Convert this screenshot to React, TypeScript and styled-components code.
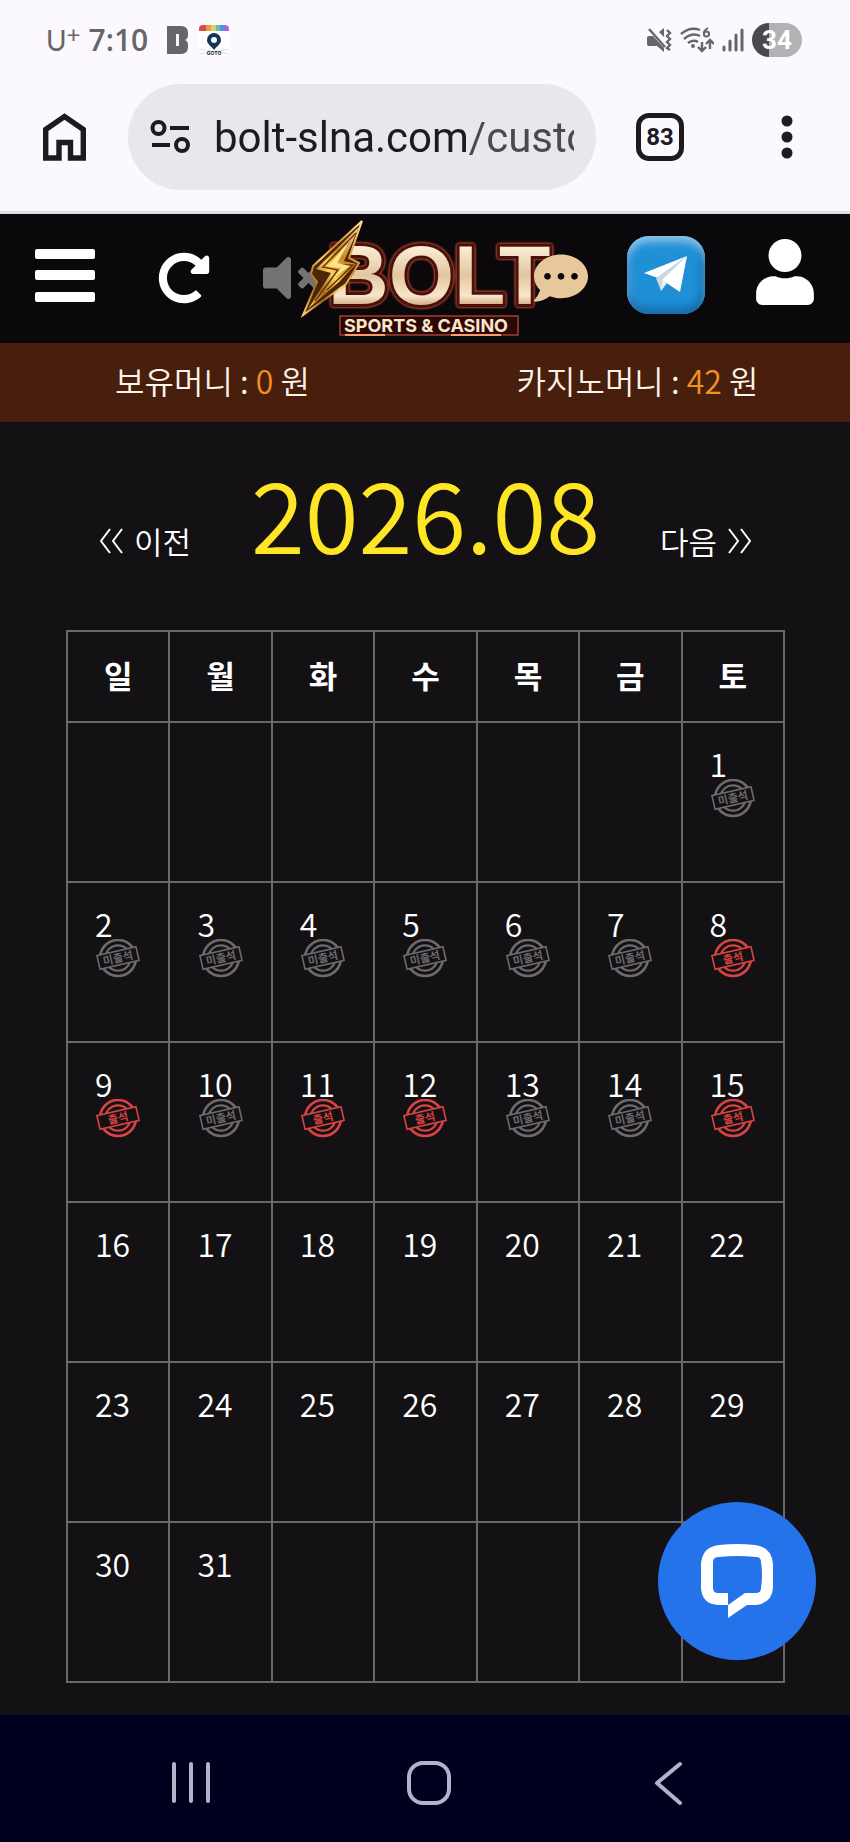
import React from 'react';
import styled, { createGlobalStyle } from 'styled-components';
import { FaRedoAlt, FaVolumeMute, FaCommentDots, FaUser } from 'react-icons/fa';

const korean = '"Noto Sans CJK KR DemiLight", "Noto Sans CJK KR", "Noto Sans", sans-serif';
const chromeFont = 'Roboto, "Open Sans", sans-serif';

const GlobalStyle = createGlobalStyle`
  * { box-sizing: border-box; }
  body { margin: 0; background: #141114; }
  button { padding: 0; border: 0; background: none; color: inherit; font: inherit; cursor: pointer; }
  a { color: inherit; text-decoration: none; }
  svg { display: block; flex: none; }
`;

const Page = styled.div`
  display: flex;
  flex-direction: column;
  min-height: 100vh;
  font-family: ${korean};
  font-size: 31px;
  font-weight: 350;
  color: #fff;
`;

/* Phone status bar and browser toolbar */

const BrowserChrome = styled.header`
  background: #fbf9fd;
  border-bottom: 3px solid #e0dfe2;
  color: #1c1b1f;
  font-family: ${chromeFont};
`;

const StatusBar = styled.div`
  display: flex;
  align-items: center;
  justify-content: space-between;
  height: 80px;
  padding: 0 48px 0 46px;
  color: #676569;
`;

const StatusGroup = styled.div`
  display: flex;
  align-items: center;
  gap: 8px;
`;

const Carrier = styled.span`
  font-family: Lato, sans-serif;
  font-size: 28px;
  font-weight: 400;
  line-height: 40px;
  sup { font-size: 24px; line-height: 0; vertical-align: 8px; }
`;

const Clock = styled.time`
  font-family: "Open Sans", sans-serif;
  font-size: 30px;
  font-weight: 600;
  line-height: 40px;
  margin-right: 10px;
`;

const Battery = styled.span`
  display: grid;
  place-items: center;
  width: 50px;
  height: 34px;
  border-radius: 17px;
  background: linear-gradient(90deg, #4b494d 34%, #b3b1b4 34%);
  color: #fff;
  font-size: 26px;
  font-weight: 700;
  line-height: 34px;
`;

const Toolbar = styled.div`
  display: flex;
  align-items: center;
  padding: 4px 47px 21px 42px;
`;

const Omnibox = styled.label`
  display: flex;
  flex: 1;
  align-items: center;
  gap: 22px;
  min-width: 0;
  height: 106px;
  margin: 0 40px 0 41px;
  padding: 0 22px;
  border-radius: 53px;
  background: #e9e7eb;
`;

const UrlInput = styled.input`
  flex: 1;
  min-width: 0;
  height: 60px;
  padding: 0;
  border: 0;
  outline: 0;
  background: linear-gradient(90deg, #1c1b1f 256px, #4b494f 256px);
  background-clip: text;
  -webkit-background-clip: text;
  color: transparent;
  font-family: ${chromeFont};
  font-size: 42px;
`;

const TabsButton = styled.button`
  width: 48px;
  height: 48px;
  border: 5px solid #1c1b1f;
  border-radius: 13px;
  font-size: 24px;
  font-weight: 700;
  line-height: 38px;
`;

const MoreButton = styled.button`
  margin-left: 87px;
`;

/* Site header */

const SiteHeader = styled.nav`
  display: grid;
  grid-template-columns: 1fr 1fr 364px 1fr 1fr;
  align-items: center;
  justify-items: center;
  height: 129px;
  padding: 0 6px 8px;
  background: #0a080b;
`;

const BrandGroup = styled.div`
  display: flex;
  align-items: center;
`;

const RefreshButton = styled.button`
  padding-top: 6px;
`;

const ProfileButton = styled.button`
  padding-bottom: 6px;
`;

const MuteButton = styled.button`
  margin: 6px -18px 0 0;
  color: #747275;
`;

const BrandLink = styled.a`
  position: relative;
`;

const Wordmark = styled.text`
  paint-order: stroke;
  filter: drop-shadow(0 0 1px #d0553a) drop-shadow(0 0 1px #b0432c);
`;

const ChatButton = styled.button`
  position: relative;
  margin: 6px 0 0 -17px;
  color: #e8c79d;
`;

const Telegram = styled.a`
  display: grid;
  place-items: center;
  width: 78px;
  height: 78px;
  border-radius: 22px;
  background: #1f8fd6;
  box-shadow: inset 0 8px 8px -2px #8cc4ea, inset 0 -6px 8px #176ba6, inset 5px 0 7px #3f9edb, inset -4px 0 6px #1a78b6;
`;

const MoneyBar = styled.div`
  display: grid;
  grid-template-columns: 1fr 1fr;
  padding: 0 0 5px;
  background: #481f0d;
`;

const Money = styled.p`
  margin: 0;
  font-size: 32px;
  line-height: 74px;
  text-align: center;
  color: #fdf3ea;
  span { color: #f2921d; }
`;

/* Attendance calendar */

const Main = styled.main`
  position: relative;
  flex: 1;
  padding: 40px 65px 32px 66px;
`;

const MonthBar = styled.div`
  display: flex;
  align-items: baseline;
  justify-content: space-between;
  padding: 0 32px;
`;

const MonthLink = styled.a`
  display: flex;
  align-items: center;
  gap: 10px;
  line-height: 40px;
`;

const MonthTitle = styled.h1`
  margin: 0;
  font-size: 98px;
  font-weight: 350;
  line-height: 98px;
  color: #fee525;
`;

const Calendar = styled.table`
  width: 100%;
  margin-top: 69px;
  border-collapse: collapse;
  table-layout: fixed;
  th, td { border: 2px solid #6b686b; }
`;

const DayName = styled.th`
  height: 91px;
  padding: 0 0 4px;
  font-family: "Noto Sans CJK KR", sans-serif;
  font-weight: 700;
  line-height: 40px;
`;

const DayCell = styled.td`
  height: 160px;
  padding: 24px 0 0;
  vertical-align: top;
`;

const DayNumber = styled.span`
  display: block;
  padding-left: 27px;
  font-size: 32px;
  line-height: 32px;
`;

const StampIcon = styled.svg`
  margin: 0 auto;
`;

const SupportButton = styled.button`
  position: absolute;
  right: 34px;
  bottom: 55px;
  display: grid;
  place-items: center;
  width: 158px;
  height: 158px;
  border-radius: 50%;
  background: #2573ea;
`;

/* System navigation */

const SystemNav = styled.nav`
  display: flex;
  align-items: center;
  justify-content: space-between;
  height: 128px;
  padding: 8px 167px 0;
  background: #00001e;
`;

const weekdays = ['일', '월', '화', '수', '목', '금', '토'];
const attended = new Set([8, 9, 11, 12, 15]);
const lastMarked = 15;
const firstWeekday = 6;
const daysInMonth = 31;

const weeks = Array.from({ length: 6 }, (_, w) =>
  Array.from({ length: 7 }, (_, d) => {
    const day = w * 7 + d - firstWeekday + 1;
    return day >= 1 && day <= daysInMonth ? day : null;
  }),
);

function Stamp({ present }: { present: boolean }) {
  const color = present ? '#d94343' : '#6d6a6d';
  return (
    <StampIcon width="44" height="40" viewBox="0 0 44 40" role="img" aria-label={present ? '출석' : '미출석'}>
      <g fill="none" stroke={color}>
        <circle cx="22" cy="19" r="18" strokeWidth="2.6" />
        <circle cx="22" cy="19" r="12.6" strokeWidth="2.2" />
        <g transform="rotate(-13 22 19)">
          <rect x="2" y="12" width="40" height="14" fill="#141114" strokeWidth="1.6" />
        </g>
      </g>
      <text
        x="22" y="23" transform="rotate(-13 22 19)" textAnchor="middle" fill={color}
        fontFamily="Noto Sans CJK KR" fontSize="11" fontWeight="700"
      >
        {present ? '출석' : '미출석'}
      </text>
    </StampIcon>
  );
}

function Chevrons({ forward = false }: { forward?: boolean }) {
  return (
    <svg width="26" height="26" viewBox="0 0 26 26" fill="none" stroke="#fff" strokeWidth="2" aria-hidden="true">
      <path d={forward ? 'M2 1l9 12l-9 12M14 1l9 12l-9 12' : 'M12 1l-9 12l9 12M24 1l-9 12l9 12'} />
    </svg>
  );
}

function BoltLogo() {
  return (
    <svg width="250" height="121" viewBox="0 0 250 121" overflow="visible">
      <defs>
        <linearGradient id="cream" x1="0" y1="0" x2="0" y2="1">
          <stop offset="0.15" stopColor="#fff4dd" />
          <stop offset="0.5" stopColor="#e3c6a2" />
          <stop offset="0.72" stopColor="#f9e6c9" />
          <stop offset="0.85" stopColor="#c79a72" />
        </linearGradient>
        <linearGradient id="gold" x1="1" y1="0" x2="0" y2="1">
          <stop offset="0" stopColor="#ffe19a" />
          <stop offset="0.35" stopColor="#c98524" />
          <stop offset="0.55" stopColor="#ffd45e" />
          <stop offset="0.75" stopColor="#a8661a" />
          <stop offset="1" stopColor="#ffcf6a" />
        </linearGradient>
      </defs>
      <Wordmark
        x="27" y="90" fill="url(#cream)" stroke="#4a110a" strokeWidth="6" strokeLinejoin="round"
        fontFamily="Liberation Sans" fontWeight="700" fontSize="84"
      >
        BOLT
      </Wordmark>
      <path d="M61 7 L12 52 L10 60 L16 68 L2 101 L45 70 L58 49 L48 44 Z" fill="#4a2508" stroke="url(#gold)" strokeWidth="2" />
      <path d="M58 13 L15 55 L30 59 L7 95 L38 68 L55 50 L43 47 Z" fill="url(#gold)" />
      <path d="M55 19 L22 53 L37 56 L14 87 M48 28 L31 51 L52 51 L26 76" fill="none" stroke="#6b3a0c" strokeWidth="1.6" />
      <path d="M50 25 L27 52 L40 54 L32 64 L49 52 L36 49 Z" fill="#ffe58a" />
      <rect x="39" y="102" width="178" height="19" fill="#2b0805" stroke="#a2402c" strokeWidth="1.5" />
      <path d="M44 121h40M150 121h50" stroke="#ff9a6a" strokeWidth="2" />
      <text x="43" y="118" fill="#fbe6cb" fontFamily="Inter" fontSize="18" fontWeight="700">SPORTS &amp; CASINO</text>
    </svg>
  );
}

export default function App() {
  return (
    <Page>
      <GlobalStyle />
      <BrowserChrome>
        <StatusBar>
          <StatusGroup>
            <Carrier>U<sup>+</sup></Carrier>
            <Clock>7:10</Clock>
            <svg width="24" height="30" viewBox="0 0 24 30">
              <path d="M1 1h14q7 0 7 7v2q0 4-3 5q3 1 3 5v2q0 7-7 7H1zM10 9v12h3V9z" fill="#676569" fillRule="evenodd" />
            </svg>
            <svg width="32" height="32" viewBox="0 0 32 32">
              <rect y="1" width="32" height="31" rx="4" fill="#fff" />
              <path d="M1 7V5q0-4 4-4h3v6z" fill="#d94a50" />
              <path d="M8 1h5v6H8z" fill="#eb9a4a" />
              <path d="M13 1h5v6h-5z" fill="#d9cf62" />
              <path d="M18 1h4v6h-4z" fill="#67bfae" />
              <path d="M22 1h4v6h-4z" fill="#5a8fe0" />
              <path d="M26 1h1q4 0 4 4v2h-5z" fill="#9a6be0" />
              <path d="M1 25l30 5M1 30l30-5" stroke="#d5e3e6" />
              <path d="M16 9a7 7 0 0 0-7 7c0 4 4 6 7 10c3-4 7-6 7-10a7 7 0 0 0-7-7z" fill="#12355b" />
              <circle cx="16" cy="16" r="3" fill="#fff" />
              <text x="16" y="31" textAnchor="middle" fontFamily="Inter" fontWeight="700" fontSize="5" fill="#222">GOTO</text>
            </svg>
          </StatusGroup>
          <StatusGroup>
            <svg width="25" height="26" viewBox="0 0 25 26" fill="#676569">
              <path d="M0 11q0-2 2-2h4l11 12v4l-7-6H2q-2 0-2-2zM12 5l5-4v9z" />
              <path d="M2 2l16 18" stroke="#676569" strokeWidth="2.4" />
              <path d="M20 3l3 3-3 3 3 3-3 3 3 3-3 3 3 2" fill="none" stroke="#676569" strokeWidth="2.4" />
            </svg>
            <svg width="34" height="28" viewBox="0 0 34 28" fill="none" stroke="#676569" strokeWidth="2.4">
              <path d="M1 8Q10 0 20 4M4 13q8-7 16-3M8 17q5-4 10-1" />
              <circle cx="13" cy="20" r="2" fill="#676569" stroke="none" />
              <path d="M22 16v9M18 21l4 4 4-4M30 23v-9M26 18l4-4 4 4" />
              <path d="M28 2q-5 3-4 6" strokeWidth="2" />
              <circle cx="26.5" cy="8" r="2.6" strokeWidth="2" />
            </svg>
            <svg width="22" height="26" viewBox="0 0 22 26" stroke="#676569" strokeWidth="3" strokeLinecap="round">
              <path d="M2 20v3" /><path d="M8 14v9" /><path d="M14 8v15" /><path d="M20 3v20" />
            </svg>
            <Battery>34</Battery>
          </StatusGroup>
        </StatusBar>
        <Toolbar>
          <button aria-label="Home">
            <svg width="45" height="50" viewBox="0 0 45 50" fill="none" stroke="#1c1b1f" strokeWidth="5.4">
              <path d="M3.7 46V17.5L22.5 4.5L41.3 17.5V46H28.5V30.5H17V46z" />
            </svg>
          </button>
          <Omnibox>
            <svg width="42" height="36" viewBox="0 0 42 36" fill="none" stroke="#1c1b1f" strokeWidth="4">
              <circle cx="8.5" cy="9" r="6" /><path d="M20 9h19M2 26h18" /><circle cx="32" cy="26" r="6" />
            </svg>
            <UrlInput type="text" aria-label="Address" defaultValue="bolt-slna.com/custo" />
          </Omnibox>
          <TabsButton aria-label="Tabs">83</TabsButton>
          <MoreButton aria-label="More">
            <svg width="32" height="48" viewBox="0 0 32 48" fill="#1c1b1f">
              <circle cx="16" cy="8" r="5.5" /><circle cx="16" cy="24" r="5.5" /><circle cx="16" cy="40" r="5.5" />
            </svg>
          </MoreButton>
        </Toolbar>
      </BrowserChrome>

      <SiteHeader>
        <button aria-label="메뉴">
          <svg width="60" height="54" viewBox="0 0 60 54" fill="#fff">
            <rect width="60" height="10" y="1" rx="2" />
            <rect width="60" height="10" y="22" rx="2" />
            <rect width="60" height="10" y="44" rx="2" />
          </svg>
        </button>
        <RefreshButton aria-label="새로고침"><FaRedoAlt size={52} /></RefreshButton>
        <BrandGroup>
          <MuteButton aria-label="음소거"><FaVolumeMute size={56} /></MuteButton>
          <BrandLink href="#" aria-label="BOLT SPORTS & CASINO"><BoltLogo /></BrandLink>
          <ChatButton aria-label="채팅"><FaCommentDots size={54} /></ChatButton>
        </BrandGroup>
        <Telegram href="#" aria-label="Telegram">
          <svg width="46" height="40" viewBox="0 0 46 40">
            <path d="M1 18L44 1L15 23z" fill="#fff" />
            <path d="M44 1L13 23L18 36L22 28z" fill="#c9d6e2" />
            <path d="M44 1L19 25L37 37z" fill="#fff" />
            <path d="M18 36l6-8-5-3z" fill="#e9eff5" />
          </svg>
        </Telegram>
        <ProfileButton aria-label="내 정보"><FaUser size={66} /></ProfileButton>
      </SiteHeader>

      <MoneyBar>
        <Money>보유머니 : <span>0</span> 원</Money>
        <Money>카지노머니 : <span>42</span> 원</Money>
      </MoneyBar>

      <Main>
        <MonthBar>
          <MonthLink href="#"><Chevrons />이전</MonthLink>
          <MonthTitle>2026.08</MonthTitle>
          <MonthLink href="#">다음<Chevrons forward /></MonthLink>
        </MonthBar>
        <Calendar>
          <thead>
            <tr>{weekdays.map((name) => <DayName key={name} scope="col">{name}</DayName>)}</tr>
          </thead>
          <tbody>
            {weeks.map((week, w) => (
              <tr key={w}>
                {week.map((day, d) => (
                  <DayCell key={d}>
                    {day && <DayNumber>{day}</DayNumber>}
                    {day && day <= lastMarked && <Stamp present={attended.has(day)} />}
                  </DayCell>
                ))}
              </tr>
            ))}
          </tbody>
        </Calendar>
        <SupportButton aria-label="상담 채팅">
          <svg width="74" height="74" viewBox="0 0 74 74">
            <path
              d="M19 1Q37 -1 55 1Q72 3 73 20V44Q72 59 56 61H47L28 74V61H18Q2 60 1 44V20Q2 3 19 1zM19 13Q13 13 13 18V44Q13 49 18 49H28V61L45 49H56Q61 49 61 44Q63 31 61 18Q61 13 56 13Q37 11 19 13z"
              fill="#fff" fillRule="evenodd"
            />
          </svg>
        </SupportButton>
      </Main>

      <SystemNav>
        <button aria-label="최근 앱">
          <svg width="48" height="44" viewBox="0 0 48 44" stroke="#b4b2c8" strokeWidth="4" strokeLinecap="round">
            <path d="M7 3v37M24 3v37M41 3v37" />
          </svg>
        </button>
        <button aria-label="홈">
          <svg width="48" height="48" viewBox="0 0 48 48" fill="none" stroke="#b4b2c8" strokeWidth="4">
            <rect x="4" y="4" width="40" height="40" rx="14" />
          </svg>
        </button>
        <button aria-label="뒤로">
          <svg width="40" height="48" viewBox="0 0 40 48" fill="none" stroke="#b4b2c8" strokeWidth="4" strokeLinecap="round" strokeLinejoin="round">
            <path d="M37 5L14 24L37 44" />
          </svg>
        </button>
      </SystemNav>
    </Page>
  );
}
